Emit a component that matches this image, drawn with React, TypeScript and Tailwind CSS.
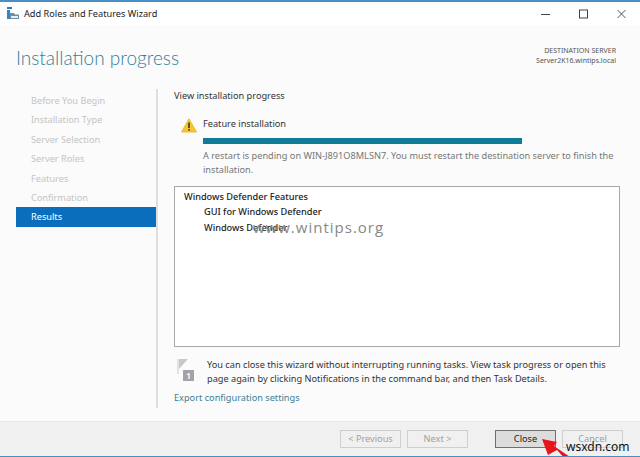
import { FunctionComponent } from 'react';

const steps = ['Before You Begin', 'Installation Type', 'Server Selection', 'Server Roles', 'Features', 'Confirmation'];

const WizardIcon = () => (
  <svg width="12" height="13" viewBox="0 0 12 13" className="shrink-0">
    <rect x="0" y="0" width="5" height="2" fill="#1f7fc4" />
    <rect x="0" y="3" width="3" height="9" fill="#2f86c8" />
    <path d="M3 6 L7 6 L8 7.5 L12 7.5 L12 12 L3 12 Z" fill="#6d8fa8" />
    <rect x="4" y="9" width="7" height="2" fill="#e8eef2" />
  </svg>
);

const WarningIcon = () => (
  <svg width="16" height="15" viewBox="0 0 16 15" className="shrink-0">
    <path d="M8 .8 L15.5 14 L.5 14 Z" fill="#f7c531" stroke="#e9b21c" strokeWidth="0.8" strokeLinejoin="round" />
    <rect x="7.2" y="4.5" width="1.6" height="5.5" fill="#333" />
    <rect x="7.2" y="11" width="1.6" height="1.6" fill="#333" />
  </svg>
);

const FlagIcon = () => (
  <svg width="18" height="24" viewBox="0 0 18 24" className="shrink-0">
    <rect x="0" y="0" width="2" height="15" fill="#e2e2e2" />
    <path d="M2 0 L11 0 L2 10 Z" fill="#c9c9c9" />
    <rect x="6" y="11" width="11" height="11" fill="#a3a3a3" />
    <text x="11.5" y="20" fontSize="8" fontWeight="700" textAnchor="middle" fill="#fff" fontFamily="'Noto Sans', sans-serif">1</text>
  </svg>
);

const WizardButton: FunctionComponent<{ label: string; active?: boolean }> = ({ label, active }) => (
  <button
    className={
      active
        ? 'flex h-[18px] w-[61px] items-center justify-center border border-[#707070] bg-[#dcdcdc] text-[#222]'
        : 'flex h-[18px] w-[61px] items-center justify-center border border-[#cfcfcf] bg-[#f0f0f0] text-[#a0a0a0]'
    }
  >
    {label}
  </button>
);

export default function App() {
  return (
    <div className="relative flex h-[457px] w-[640px] flex-col overflow-hidden border-t-2 border-b border-[#4a8fc4] bg-[#fbfbfb] font-['Noto_Sans',sans-serif] text-[9.2px] text-[#333]">
      {/* title bar */}
      <div className="flex h-[23px] shrink-0 items-center bg-white pl-[7px] pr-[14px]">
        <WizardIcon />
        <span className="ml-[5px] text-[#222]">Add Roles and Features Wizard</span>
        <div className="ml-auto flex items-center gap-[29px]">
          <svg width="9" height="10" viewBox="0 0 9 10"><path d="M0 5.5 H9" stroke="#444" strokeWidth="1" /></svg>
          <svg width="9" height="10" viewBox="0 0 9 10"><rect x=".5" y="1" width="8" height="8" fill="none" stroke="#444" strokeWidth="1" /></svg>
          <svg width="9" height="10" viewBox="0 0 9 10"><path d="M.5 1 L8.5 9 M8.5 1 L.5 9" stroke="#444" strokeWidth="0.9" /></svg>
        </div>
      </div>

      {/* header */}
      <div className="flex h-[64px] shrink-0 items-start justify-between pl-4 pr-[24px]">
        <h1 className="mt-[18px] font-['Lato',sans-serif] text-[19px] leading-[30px] font-light text-[#2f7f9c]">Installation progress</h1>
        <div className="mt-[21px] text-right text-[7px] leading-[10px] text-[#555]">
          <div>DESTINATION SERVER</div>
          <div>Server2K16.wintips.local</div>
        </div>
      </div>

      {/* body */}
      <div className="flex min-h-0 flex-1 items-start">
        <nav className="flex h-[319px] w-[158px] shrink-0 flex-col border-r-2 border-[#dedede] pl-4 pr-0 pt-[1px]">
          {steps.map((s) => (
            <div key={s} className="flex h-[19.5px] items-center pl-[15px] pt-[2px] text-[#c4c4c4]">{s}</div>
          ))}
          <div className="flex h-[20px] items-center bg-[#0a6ebd] pl-[15px] text-white">Results</div>
        </nav>

        <main className="flex min-w-0 flex-1 flex-col pl-4 pr-[20px]">
          <p className="leading-[14px]">View installation progress</p>
          <div className="mt-[14px] flex pl-[7px]">
            <div className="pt-[1px]"><WarningIcon /></div>
            <div className="ml-[6px] flex-1">
              <p className="leading-[14px]">Feature installation</p>
              <div className="mt-[7px] h-[6px] w-[319px] bg-[#0f7a99]" />
              <p className="mt-[5px] leading-[13.5px] text-[#777]">
                A restart is pending on WIN-J891O8MLSN7. You must restart the destination server to finish the installation.
              </p>
            </div>
          </div>

          <div className="mt-[10px] h-[161px] border border-[#a8a8a8] bg-white pl-[9px] pt-[2px] font-medium text-[#222]">
            <p className="leading-[15px]">Windows Defender Features</p>
            <p className="pl-[20px] leading-[15px]">GUI for Windows Defender</p>
            <p className="pl-[20px] leading-[17px]">Windows Defender</p>
          </div>

          <div className="mt-[11px] flex">
            <div className="ml-[3px] pt-[1px]"><FlagIcon /></div>
            <p className="ml-[12px] leading-[13.5px]">
              You can close this wizard without interrupting running tasks. View task progress or open this page again by clicking Notifications in the command bar, and then Task Details.
            </p>
          </div>
          <a className="mt-[6px] leading-[14px] text-[#3d7f95]">Export configuration settings</a>
        </main>
      </div>

      {/* footer */}
      <div className="flex h-[35px] shrink-0 items-center border-t border-[#e6e6e6] bg-[#f0f0f0] pr-[17px]">
        <div className="ml-auto flex items-center gap-[6px]">
          <WizardButton label="< Previous" />
          <WizardButton label="Next >" />
          <div className="w-[15px]" />
          <WizardButton label="Close" active />
          <WizardButton label="Cancel" />
        </div>
      </div>

      {/* arrow + watermarks over the shot */}
      <svg width="40" height="30" viewBox="0 0 40 30" className="absolute left-[535px] top-[428px]">
        <path d="M7 9 L22 12 L19 16 L35 27 L31 30 L22 20 L13 25 Z" fill="#e8141c" />
      </svg>
      <span className="absolute left-[253px] top-[214px] font-['Open_Sans',sans-serif] text-[15px] tracking-[1px] text-[#888]">www.wintips.org</span>
      <span className="absolute left-[566px] top-[438px] text-[12px] leading-[14px] text-[#111]">wsxdn.com</span>
    </div>
  );
}
